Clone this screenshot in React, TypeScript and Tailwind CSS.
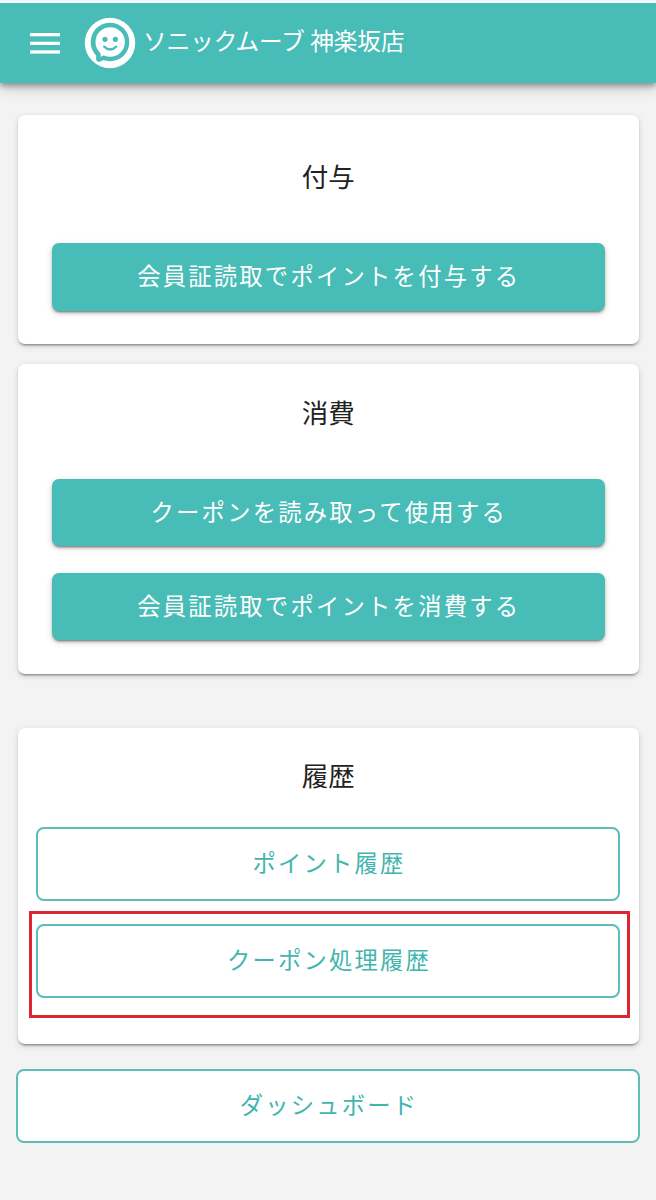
import { ReactNode } from "react";
import cn from "clsx";

interface ButtonProps {
  label: string;
  className?: string;
}

interface CardProps {
  title: string;
  className?: string;
  children: ReactNode;
}

const MenuIcon = (): JSX.Element => (
  <svg width="30" height="21" viewBox="0 0 30 21" fill="#fff">
    <rect y="0" width="30" height="3.3" />
    <rect y="8.7" width="30" height="3.3" />
    <rect y="17.3" width="30" height="3.3" />
  </svg>
);

const Logo = (): JSX.Element => (
  <svg width="52" height="52" viewBox="0 0 52 52">
    <circle cx="26" cy="26" r="25.2" fill="#fff" />
    {/* speech bubble */}
    <circle cx="26" cy="25" r="19.3" fill="#48bcb6" />
    <path
      d="M10.5 33 Q13 37 12 41.5 Q12.3 45.2 16 44.8 Q19.5 44 22 41 L24 36 Z"
      fill="#48bcb6"
    />
    {/* face */}
    <circle cx="26.2" cy="25" r="14.7" fill="#fff" />
    <path d="M14.6 31 Q17.8 35.3 16.2 39.8 Q19.4 39.2 21.4 37 L24 34 Z" fill="#fff" />
    <circle cx="21" cy="22.3" r="2.6" fill="#48bcb6" />
    <circle cx="31.4" cy="22.3" r="2.6" fill="#48bcb6" />
    <path
      d="M20.2 29.6 Q26.2 35.4 32.2 29.6"
      fill="none"
      stroke="#48bcb6"
      strokeWidth="2.3"
      strokeLinecap="round"
    />
  </svg>
);

const Card = ({ title, className, children }: CardProps): JSX.Element => (
  <section
    className={cn(
      "mx-[18px] w-[620.5px] rounded-[7px] bg-white shadow-[0_3px_2px_-2px_rgba(0,0,0,0.26),0_2px_2px_rgba(0,0,0,0.14),0_2px_6px_rgba(0,0,0,0.14)]",
      className
    )}
  >
    <h2 className="text-center text-[26.5px] leading-10 text-[#222]">{title}</h2>
    {children}
  </section>
);

const FilledButton = ({ label, className }: ButtonProps): JSX.Element => (
  <button
    className={cn(
      "flex w-full items-center justify-center rounded-[7px] bg-[#48bcb6] pb-[3px] pl-px text-[23.3px] tracking-[2.25px] text-white shadow-[0_3px_2px_-2px_rgba(0,0,0,0.3),0_2px_3px_rgba(0,0,0,0.22),0_2px_7px_rgba(0,0,0,0.14)]",
      className
    )}
  >
    {label}
  </button>
);

const OutlinedButton = ({ label, className }: ButtonProps): JSX.Element => (
  <button
    className={cn(
      "flex h-[74px] items-center justify-center rounded-[8px] border-2 border-[#5fbdb7] bg-white pb-[3px] pl-[2px] text-[23.3px] tracking-[2.2px] text-[#42b5ae]",
      className
    )}
  >
    {label}
  </button>
);

const App = (): JSX.Element => (
  <div
    lang="ja"
    className="flex h-[1200px] w-[656px] flex-col overflow-hidden bg-[#f3f3f3] font-['Noto_Sans_CJK_JP',sans-serif]"
  >
    <header className="flex h-[83px] shrink-0 items-center border-t-3 border-[#f3f8f8] bg-[#48bcb6] pl-[30px] shadow-[0_3px_6px_rgba(0,0,0,0.35),0_6px_14px_rgba(0,0,0,0.14)]">
      <button>
        <MenuIcon />
      </button>
      <div className="ml-[24px]">
        <Logo />
      </div>
      <h1 className="ml-[7px] pb-[6px] text-[23.6px] leading-9 whitespace-nowrap text-white">
        ソニックムーブ 神楽坂店
      </h1>
    </header>

    <Card title="付与" className="mt-8 h-[229px] shrink-0 px-[33.5px] pt-[41px]">
      <FilledButton label="会員証読取でポイントを付与する" className="mt-[47px] h-[68px]" />
    </Card>

    <Card title="消費" className="mt-5 h-[309.5px] shrink-0 px-[33.5px] pt-[28px]">
      <FilledButton label="クーポンを読み取って使用する" className="mt-[47px] h-[67px]" />
      <FilledButton label="会員証読取でポイントを消費する" className="mt-[27px] h-[67px]" />
    </Card>

    <Card title="履歴" className="mt-[54px] h-[316.5px] shrink-0 pt-[27.5px]">
      <div className="px-[18px] pt-[32px]">
        <OutlinedButton label="ポイント履歴" className="w-[584px]" />
      </div>
      <div className="mt-[10px] ml-[10.5px] h-[107px] w-[601px] border-3 border-[#dc2632] px-[4.5px] pt-[10px]">
        <OutlinedButton label="クーポン処理履歴" className="w-[584px]" />
      </div>
    </Card>

    <OutlinedButton label="ダッシュボード" className="mx-4 mt-[25px] shrink-0" />
  </div>
);

export default App;
